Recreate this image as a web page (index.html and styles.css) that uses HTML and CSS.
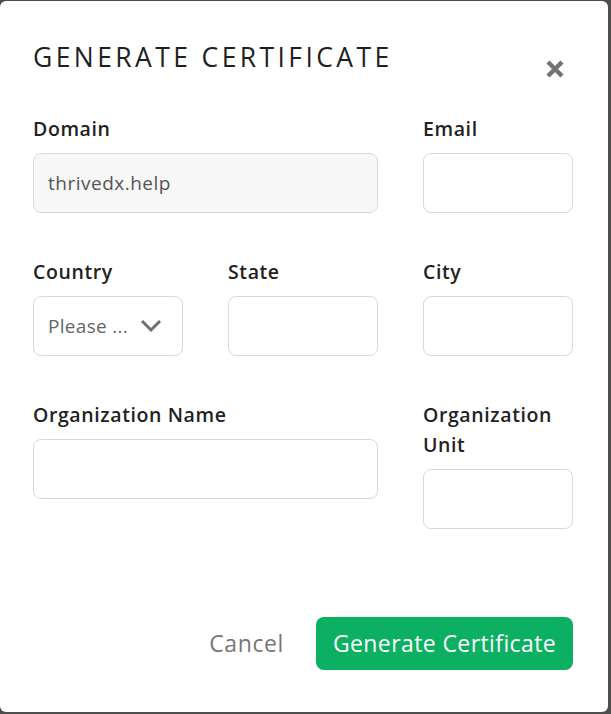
FILE: index.html
```html
<!DOCTYPE html>
<html>
<head>
<meta charset="utf-8">
<link rel="stylesheet" href="styles.css">
</head>
<body>
<div class="modal">
  <div class="header">
    <h1 class="title">GENERATE CERTIFICATE</h1>
    <button class="close" aria-label="Close">
      <svg width="20" height="20" viewBox="0 0 20 20"><path d="M3 3 L17 17 M17 3 L3 17" stroke="#737373" stroke-width="4.4" stroke-linecap="butt"/></svg>
    </button>
  </div>
  <div class="form">
    <div class="field span2">
      <label class="label">Domain</label>
      <div class="input disabled">thrivedx.help</div>
    </div>
    <div class="field">
      <label class="label">Email</label>
      <div class="input"></div>
    </div>
    <div class="field">
      <label class="label">Country</label>
      <div class="input select"><span class="ph">Please ...</span>
        <svg width="22" height="14" viewBox="0 0 22 14"><path d="M2 2 L11 11 L20 2" fill="none" stroke="#6f6f6f" stroke-width="3"/></svg>
      </div>
    </div>
    <div class="field">
      <label class="label">State</label>
      <div class="input"></div>
    </div>
    <div class="field">
      <label class="label">City</label>
      <div class="input"></div>
    </div>
    <div class="field span2">
      <label class="label">Organization Name</label>
      <div class="input"></div>
    </div>
    <div class="field">
      <label class="label">Organization Unit</label>
      <div class="input"></div>
    </div>
  </div>
  <div class="footer">
    <button class="cancel">Cancel</button>
    <button class="primary">Generate Certificate</button>
  </div>
</div>
</body>
</html>
```
FILE: styles.css
```css
* { box-sizing: border-box; }
html, body { margin: 0; padding: 0; }
body {
  background: #4d4d4d;
  width: 611px;
  height: 714px;
  overflow: hidden;
  font-family: "Open Sans", "Lato", sans-serif;
  color: #222;
}
.modal {
  margin-top: 1px;
  width: 608px;
  height: 711px;
  background: #fff;
  border-radius: 6px;
  padding: 0 35px 0 33px;
  display: flex;
  flex-direction: column;
}
.header {
  display: flex;
  justify-content: space-between;
  align-items: flex-start;
  height: 113px;
}
.title {
  margin: 39px 0 0 0;
  font-size: 26.5px;
  font-weight: 400;
  line-height: 34px;
  color: #1f1f1f;
  letter-spacing: 3.4px;
}
.close {
  margin: 58px 8px 0 0;
  padding: 0;
  border: 0;
  background: none;
  width: 20px;
  height: 20px;
  display: flex;
}
.form {
  display: grid;
  grid-template-columns: 150px 150px 150px;
  column-gap: 45px;
  row-gap: 44px;
  align-items: start;
}
.span2 { grid-column: span 2; }
.field { display: flex; flex-direction: column; }
.label {
  font-size: 19.5px;
  font-weight: 600;
  line-height: 30px;
  color: #222;
  margin-bottom: 9px;
  letter-spacing: 0.6px;
}
.input {
  height: 60px;
  border: 1px solid #d9d9d9;
  border-radius: 8px;
  background: #fff;
  display: flex;
  align-items: center;
  padding: 0 14px;
  font-size: 19px;
  color: #555;
  letter-spacing: 0.5px;
}
.input.disabled { background: #f7f7f7; }
.select { justify-content: space-between; padding-right: 20px; }
.ph { color: #666; letter-spacing: 0.3px; }
.footer {
  margin-top: auto;
  margin-bottom: 42px;
  display: flex;
  justify-content: flex-end;
  align-items: center;
  gap: 32px;
}
.cancel {
  border: 0;
  background: none;
  font-family: inherit;
  font-size: 23px;
  color: #777;
  padding: 0 0 2px 0;
  letter-spacing: 0.6px;
}
.primary {
  border: 0;
  background: #0bb062;
  color: #fff;
  font-family: inherit;
  font-size: 23px;
  height: 53px;
  width: 257px;
  border-radius: 8px;
  padding: 0 0 2px 0;
  letter-spacing: 0.4px;
}
```
